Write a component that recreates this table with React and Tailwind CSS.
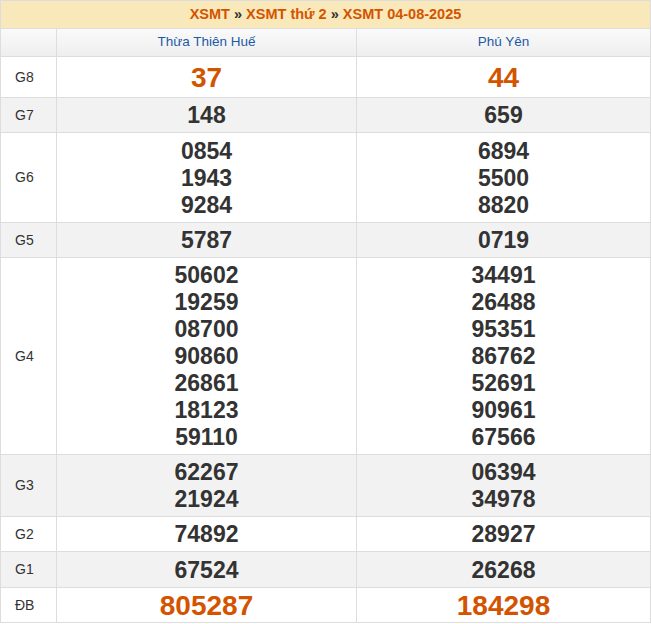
const rows = [
  { label: 'G8', a: ['37'], b: ['44'], big: true, h: 'h-[41px]' },
  { label: 'G7', a: ['148'], b: ['659'], gray: true },
  { label: 'G6', a: ['0854', '1943', '9284'], b: ['6894', '5500', '8820'], h: 'h-[90px]' },
  { label: 'G5', a: ['5787'], b: ['0719'], gray: true },
  {
    label: 'G4',
    a: ['50602', '19259', '08700', '90860', '26861', '18123', '59110'],
    b: ['34491', '26488', '95351', '86762', '52691', '90961', '67566'],
  },
  { label: 'G3', a: ['62267', '21924'], b: ['06394', '34978'], gray: true },
  { label: 'G2', a: ['74892'], b: ['28927'] },
  { label: 'G1', a: ['67524'], b: ['26268'], gray: true, h: 'h-[36px]' },
  { label: 'ĐB', a: ['805287'], b: ['184298'], big: true, h: 'h-[35px]' },
];

function Cell({ nums, big }) {
  return (
    <td className="border border-[#dddddd] pt-[4px] pb-[3px] text-center align-middle">
      {nums.map((n, i) => (
        <div
          key={i}
          className={
            big
              ? 'text-[28px] leading-[27px] font-bold text-[#d35400]'
              : 'text-[23px] leading-[27px] font-bold text-[#333333]'
          }
        >
          {n}
        </div>
      ))}
    </td>
  );
}

export default function App() {
  return (
    <div className="w-[651px] bg-white font-['Liberation_Sans',Arial,sans-serif]">
      <table className="w-[651px] table-fixed border-collapse border border-[#cccccc]">
        <colgroup>
          <col className="w-[56px]" />
          <col className="w-[300px]" />
          <col />
        </colgroup>
        <thead>
          <tr className="h-[28px] bg-[#f8e8ba]">
            <th colSpan={3} className="border border-[#dddddd] text-center text-[14.5px] font-bold text-[#d35400]">
              XSMT <span className="text-[#333333]">»</span> XSMT thứ 2 <span className="text-[#333333]">»</span> XSMT 04-08-2025
            </th>
          </tr>
          <tr className="h-[28px] bg-gradient-to-b from-[#fafafa] to-[#eeeeee]">
            <th className="border border-[#dddddd]"></th>
            <th className="border border-[#dddddd] text-center text-[13.5px] font-normal text-[#1c5aa6]">
              Thừa Thiên Huế
            </th>
            <th className="border border-[#dddddd] text-center text-[13.5px] font-normal text-[#1c5aa6]">
              Phú Yên
            </th>
          </tr>
        </thead>
        <tbody>
          {rows.map(r => (
            <tr key={r.label} className={`${r.gray ? 'bg-[#f2f2f2]' : 'bg-white'} ${r.h || ''}`}>
              <td className="border border-[#dddddd] pl-[14px] text-[14px] text-[#333333] align-middle">
                {r.label}
              </td>
              <Cell nums={r.a} big={r.big} />
              <Cell nums={r.b} big={r.big} />
            </tr>
          ))}
        </tbody>
      </table>
    </div>
  );
}
